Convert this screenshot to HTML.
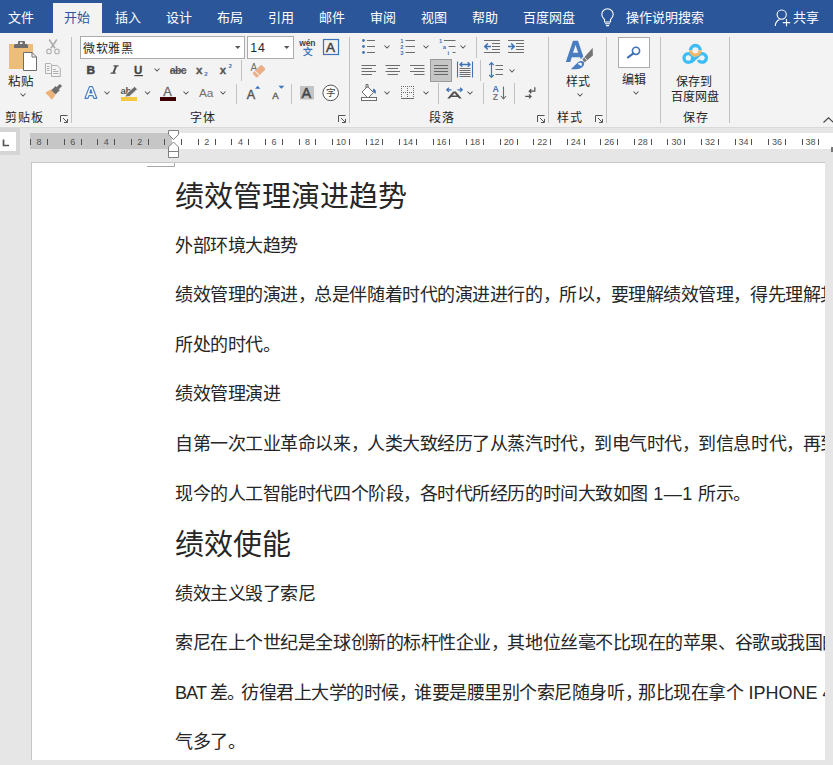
<!DOCTYPE html>
<html lang="zh-CN">
<head>
<meta charset="utf-8">
<style>
*{margin:0;padding:0;box-sizing:border-box}
html,body{width:833px;height:765px;overflow:hidden;background:#E6E6E6;font-family:"Liberation Sans",sans-serif;color:#262626}
.a{position:absolute;white-space:nowrap}
#tabs{position:absolute;left:0;top:0;width:833px;height:33px;background:#2B579A}
.tab{position:absolute;top:9px;font-size:13px;line-height:17px;color:#fff;white-space:nowrap}
#active{position:absolute;left:53px;top:3px;width:49px;height:30px;background:#F3F3F3}
#ribbon{position:absolute;left:0;top:33px;width:833px;height:94px;background:#F3F3F3}
#rb{position:absolute;left:0;top:127px;width:833px;height:1px;background:#D9D9D9}
.l{position:absolute;font-size:12px;line-height:14px;color:#262626;white-space:nowrap}
#svg{position:absolute;left:0;top:0}
#page{position:absolute;left:31px;top:163px;width:794px;height:597px;background:#fff;overflow:hidden;border-left:1px solid #C6C6C6}
.p{position:absolute;left:143px;font-size:18px;letter-spacing:-0.45px;line-height:18px;font-weight:200;color:#262626;white-space:nowrap}
.p i{font-style:normal;letter-spacing:-1.5px}
.p b{font-weight:200;letter-spacing:0}
.h{position:absolute;left:143px;font-size:29px;line-height:32px;font-weight:200;color:#262626;white-space:nowrap}
.rn{position:absolute;top:137px;font-size:9px;line-height:10px;color:#505050;white-space:nowrap}
</style>
</head>
<body>
<div id="tabs">
  <div id="active"></div>
  <div class="tab" style="left:8px">文件</div>
  <div class="tab" style="left:64px;color:#2B579A">开始</div>
  <div class="tab" style="left:115px">插入</div>
  <div class="tab" style="left:166px">设计</div>
  <div class="tab" style="left:217px">布局</div>
  <div class="tab" style="left:268px">引用</div>
  <div class="tab" style="left:319px">邮件</div>
  <div class="tab" style="left:370px">审阅</div>
  <div class="tab" style="left:421px">视图</div>
  <div class="tab" style="left:472px">帮助</div>
  <div class="tab" style="left:523px">百度网盘</div>
  <div class="tab" style="left:626px">操作说明搜索</div>
  <div class="tab" style="left:793px">共享</div>
  <svg style="position:absolute;left:0;top:0" width="833" height="33">
    <g fill="none" stroke="#fff" stroke-width="1.1">
      <path d="M604.5,19.5 C602.5,17.8 601.8,16 601.8,14.5 A5.7,5.7 0 0 1 613.2,14.5 C613.2,16 612.5,17.8 610.5,19.5 V22 H604.5 Z"/>
      <path d="M605,23.8 H610 M606,25.6 H609"/>
      <circle cx="781.7" cy="14.6" r="4.6"/>
      <path d="M775.2,26 C775.5,22.5 777.5,20.3 779.5,19.5"/>
      <path d="M786.5,19 V26.3 M782.8,22.6 H790.2"/>
    </g>
  </svg>
</div>
<div id="ribbon"></div>
<div id="rb"></div>
<svg id="svg" width="833" height="128" viewBox="0 0 833 128">
  <!-- separators -->
  <g fill="#C2C2C2">
    <rect x="71" y="37" width="1" height="86"/>
    <rect x="349" y="37" width="1" height="86"/>
    <rect x="548" y="37" width="1" height="86"/>
    <rect x="606" y="37" width="1" height="86"/>
    <rect x="660" y="37" width="1" height="86"/>
    <rect x="729" y="37" width="1" height="86"/>
    <rect x="241" y="60" width="1" height="21"/>
    <rect x="236" y="84" width="1" height="20"/>
    <rect x="291" y="84" width="1" height="20"/>
    <rect x="476" y="37" width="1" height="21"/>
    <rect x="480" y="60" width="1" height="21"/>
    <rect x="438" y="83" width="1" height="21"/>
    <rect x="483" y="83" width="1" height="21"/>
    <rect x="514" y="83" width="1" height="21"/>
  </g>
  <!-- chevrons -->
  <g fill="none" stroke="#555" stroke-width="1.05">
    <path d="M20.5,93.5 L23,96 L25.5,93.5"/>
    <path d="M154.5,68.5 L157,71 L159.5,68.5"/>
    <path d="M104.5,91.5 L107,94 L109.5,91.5"/>
    <path d="M145,91.5 L147.5,94 L150,91.5"/>
    <path d="M183.5,91.5 L186,94 L188.5,91.5"/>
    <path d="M220.5,91.5 L223,94 L225.5,91.5"/>
    <path d="M384.5,45.5 L387,48 L389.5,45.5"/>
    <path d="M423.5,45.5 L426,48 L428.5,45.5"/>
    <path d="M460.5,45.5 L463,48 L465.5,45.5"/>
    <path d="M509.5,69.5 L512,72 L514.5,69.5"/>
    <path d="M384.5,91.5 L387,94 L389.5,91.5"/>
    <path d="M423.5,91.5 L426,94 L428.5,91.5"/>
    <path d="M467.5,91.5 L470,94 L472.5,91.5"/>
    <path d="M577.5,93.5 L580,96 L582.5,93.5"/>
    <path d="M633.5,91.5 L636,94 L638.5,91.5"/>
    <path d="M823.5,122.5 L828.5,117.8 L833.5,122.5" stroke="#444"/>
  </g>
  <!-- launchers -->
  <g fill="none" stroke="#555" stroke-width="1">
    <path d="M60.5,122 V115.5 H67.5 M63,118 L67,122 M64,122.5 H67.5 V119"/>
    <path d="M338.5,122 V115.5 H345.5 M341,118 L345,122 M342,122.5 H345.5 V119"/>
    <path d="M537.5,122 V115.5 H544.5 M540,118 L544,122 M541,122.5 H544.5 V119"/>
    <path d="M595.5,122 V115.5 H602.5 M598,118 L602,122 M599,122.5 H602.5 V119"/>
  </g>

  <!-- CLIPBOARD -->
  <rect x="9" y="44" width="24" height="25" fill="#EDBE7A"/>
  <path d="M14,48 V45.5 Q14,44 15.5,44 H18 V42 Q18,41 19,41 H24 Q25,41 25,42 V44 H26.5 Q28,44 28,45.5 V48 Z" fill="#6D6D6D"/>
  <rect x="20" y="42.2" width="2.4" height="1.8" fill="#F3F3F3"/>
  <path d="M23.5,52.5 H32 L36.5,57 V70.5 H23.5 Z" fill="#fff" stroke="#6D6D6D"/>
  <path d="M32,52.5 V57 H36.5" fill="none" stroke="#6D6D6D"/>
  <!-- scissors -->
  <g fill="none" stroke="#B0B0B0">
    <path d="M49.2,39.5 L55,48.3 M56.8,39.5 L51,48.3" stroke-width="1.7"/>
    <circle cx="49" cy="51.4" r="2.3" stroke-width="1.1"/>
    <circle cx="57" cy="51.4" r="2.3" stroke-width="1.1"/>
  </g>
  <!-- copy -->
  <g fill="none" stroke="#B0B0B0" stroke-width="1">
    <path d="M45.5,63.5 H50.5 L52.5,65.5 V73.5 H45.5 Z M47,66.5 H49.5 M47,68.5 H49.5 M47,70.5 H49.5"/>
    <path d="M51.5,65.5 H57.3 L60.3,68.5 V76.5 H51.5 Z" fill="#F3F3F3"/>
    <path d="M53,69.5 H56 M53,71.5 H58.5 M53,73.5 H58.5"/>
  </g>
  <!-- format painter -->
  <path d="M45.3,92.4 L51.4,89.3 L55.3,95.4 L51.8,99.8 Z" fill="#EBB27A"/>
  <path d="M51.3,90.3 L55.6,86 L59.8,90.2 L55.5,94.5 Z" fill="#6D6D6D"/>
  <path d="M56.5,87.2 L59.8,83.9 L62,86.1 L58.7,89.4 Z" fill="#6D6D6D"/>

  <!-- FONT GROUP -->
  <rect x="80.5" y="36.5" width="164" height="22" fill="#fff" stroke="#ABABAB"/>
  <rect x="247.5" y="36.5" width="46" height="22" fill="#fff" stroke="#ABABAB"/>
  <path d="M235,46 H240.5 L237.75,49 Z" fill="#555"/>
  <path d="M284,46 H289.5 L286.75,49 Z" fill="#555"/>
  <text x="250.3" y="51.8" font-family="Liberation Sans" font-size="12.3" fill="#262626" letter-spacing="0.8">14</text>
  <!-- wen -->
  <text x="299.3" y="46" font-family="Liberation Sans" font-weight="bold" font-size="8.5" fill="#444" letter-spacing="-0.2">wén</text>
  <!-- enclosed A -->
  <rect x="323.5" y="39.5" width="15" height="15" fill="#F3F3F3" stroke="#3F73B8" stroke-width="1.2"/>
  <text x="326" y="51.6" font-family="Liberation Sans" font-size="13.5" fill="#444" stroke="#444" stroke-width="0.5">A</text>
  <!-- B I U -->
  <text x="86.5" y="73.8" font-family="Liberation Sans" font-weight="bold" font-size="11.8" fill="#444" stroke="#444" stroke-width="0.5">B</text>
  <path d="M113.6,65.2 H118.6 V66.5 H113.3 Z M110.7,72.4 H115.8 L115.6,73.7 H110.5 Z M115.2,65.8 H117.3 L114.4,73 H112.3 Z" fill="#505050"/>
  <text x="134" y="73.8" font-family="Liberation Sans" font-weight="bold" font-size="11.5" fill="#444" stroke="#444" stroke-width="0.3">U</text>
  <rect x="134.3" y="75" width="8.7" height="1.2" fill="#444"/>
  <!-- abc strike -->
  <text x="169.8" y="73.8" font-family="Liberation Sans" font-weight="bold" font-size="10.5" fill="#555" letter-spacing="-0.6">abc</text>
  <rect x="170" y="70.2" width="16.5" height="1.1" fill="#555"/>
  <!-- x2 -->
  <text x="196" y="73.9" font-family="Liberation Sans" font-weight="bold" font-size="11.5" fill="#555" stroke="#555" stroke-width="0.3">x</text>
  <text x="204.3" y="76.4" font-family="Liberation Sans" font-weight="bold" font-size="6.2" fill="#3F73B8">2</text>
  <text x="219.8" y="73.9" font-family="Liberation Sans" font-weight="bold" font-size="11.5" fill="#555" stroke="#555" stroke-width="0.3">x</text>
  <text x="228.6" y="67.9" font-family="Liberation Sans" font-weight="bold" font-size="6.2" fill="#3F73B8">2</text>
  <!-- eraser -->
  <text x="250.6" y="70.6" font-family="Liberation Sans" font-size="10" fill="#6D6D6D">A</text>
  <g transform="rotate(-45 259 71.2)"><rect x="252.7" y="68" width="12.6" height="6.4" rx="1.3" fill="#EBAE86"/><rect x="255.8" y="68" width="0.9" height="6.4" fill="#F3F3F3"/></g>
  
  <!-- text effects A -->
  <path d="M85,98.3 L89.4,86.6 H92.4 L96.8,98.3 H93.9 L92.9,95.6 H88.9 L88,98.3 Z M89.8,93 H92 L90.9,89.6 Z" fill="#fff" fill-rule="evenodd" stroke="#4A7EC0" stroke-width="1.2" stroke-linejoin="round"/><path d="M89.8,93 H92 L90.9,89.6 Z" fill="#4A7EC0"/>
  <!-- highlighter -->
  <text x="120.6" y="94.3" font-family="Liberation Sans" font-size="9.5" font-weight="bold" fill="#555" letter-spacing="-0.4">ab</text>
  <path d="M125,97 L126.6,93.6 L134.6,86.4 L137.4,89.2 L129.4,96.4 Z" fill="#6D6D6D" stroke="#F3F3F3" stroke-width="0.7"/>
  <rect x="121" y="97" width="16" height="4" fill="#F5C842"/>
  <!-- font color -->
  <text x="163.2" y="96.4" font-family="Liberation Sans" font-size="12.8" fill="#666" stroke="#666" stroke-width="0.3">A</text>
  <rect x="160" y="97" width="16" height="4" fill="#3C0000"/>
  <!-- Aa -->
  <text x="199" y="97.2" font-family="Liberation Sans" font-size="11.8" fill="#6D6D6D">Aa</text>
  <!-- grow/shrink -->
  <text x="246.8" y="98.7" font-family="Liberation Sans" font-size="12.6" fill="#555" stroke="#555" stroke-width="0.4">A</text>
  <path d="M255,88.8 L257.7,85.8 L260.4,88.8 Z" fill="#3F73B8"/>
  <text x="272.3" y="98.7" font-family="Liberation Sans" font-size="9.6" fill="#555" stroke="#555" stroke-width="0.35">A</text>
  <path d="M278.4,85.8 L284.4,85.8 L281.4,88.8 Z" fill="#3F73B8"/>
  <!-- shaded A -->
  <rect x="300" y="86" width="14" height="13.5" fill="#C4C4C4"/>
  <text x="301.6" y="98" font-family="Liberation Sans" font-size="14.5" fill="#444" stroke="#444" stroke-width="0.5">A</text>
  <!-- enclosed char -->
  <circle cx="330.7" cy="92.85" r="7.8" fill="#fff" stroke="#505050" stroke-width="1"/>

  <!-- PARAGRAPH -->
  <g fill="#3F73B8">
    <circle cx="363.5" cy="40.5" r="1.4"/><circle cx="363.5" cy="46.5" r="1.4"/><circle cx="363.5" cy="52.5" r="1.4"/>
  </g>
  <g fill="none" stroke="#6D6D6D" stroke-width="1">
    <path d="M367,40.5 H375 M367,46.5 H375 M367,52.5 H375"/>
    <path d="M405.5,40.5 H415 M405.5,46.5 H415 M405.5,52.5 H415"/>
    <path d="M444,40.5 H455.5 M448.5,46.5 H455.5 M452.5,52.5 H455.5"/>
  </g>
  <g font-family="Liberation Sans" font-size="5.8" font-weight="bold" fill="#3F73B8">
    <text x="400.3" y="42.8">1</text><text x="400.3" y="48.8">2</text><text x="400.3" y="54.8">3</text>
    <text x="439" y="42.8">1</text><text x="442.8" y="48.8">a</text><text x="447.6" y="54.8">i</text>
  </g>
  <!-- indent -->
  <g fill="none" stroke="#6D6D6D" stroke-width="1">
    <path d="M484,40.5 H500 M492,43.5 H500 M492,46.5 H500 M492,49.5 H500 M484,52.5 H500"/>
    <path d="M508,40.5 H524 M516,43.5 H524 M516,46.5 H524 M516,49.5 H524 M508,52.5 H524"/>
  </g>
  <g fill="none" stroke="#3F73B8" stroke-width="1.6">
    <path d="M485,46.5 H491 M487.8,43.5 L484.8,46.5 L487.8,49.5"/>
    <path d="M508,46.5 H514 M511.2,43.5 L514.2,46.5 L511.2,49.5"/>
  </g>
  <!-- alignment -->
  <g fill="none" stroke="#6D6D6D" stroke-width="1">
    <path d="M361.5,65.5 H376 M361.5,68.5 H372 M361.5,71.5 H376 M361.5,74.5 H372"/>
    <path d="M385.5,65.5 H400 M387.5,68.5 H398 M385.5,71.5 H400 M387.5,74.5 H398"/>
    <path d="M410,65.5 H424.5 M414,68.5 H424.5 M410,71.5 H424.5 M414,74.5 H424.5"/>
  </g>
  <rect x="430.5" y="59.5" width="21" height="22" fill="#C6C6C6" stroke="#9A9A9A"/>
  <path d="M434,65.5 H448 M434,68.5 H448 M434,71.5 H448 M434,74.5 H448" fill="none" stroke="#666" stroke-width="1"/>
  <!-- distributed -->
  <path d="M457.5,61.5 V77.5 M472.5,61.5 V77.5" stroke="#3F73B8" stroke-width="1.1"/>
  <path d="M460,64.5 H470 M462.3,62.2 L460,64.5 L462.3,66.8 M467.7,62.2 L470,64.5 L467.7,66.8" fill="none" stroke="#3F73B8" stroke-width="1.3"/>
  <path d="M459.5,68.5 H470.5 M459.5,70.5 H470.5 M459.5,72.5 H470.5 M459.5,74.5 H470.5 M459.5,76.5 H470.5" fill="none" stroke="#6D6D6D" stroke-width="1"/>
  <!-- line spacing -->
  <path d="M491.5,63 V77 M489.2,65.2 L491.5,62.6 L493.8,65.2 M489.2,74.8 L491.5,77.4 L493.8,74.8" fill="none" stroke="#3F73B8" stroke-width="1.2"/>
  <path d="M495.5,65.5 H503 M495.5,69.5 H503 M495.5,74.5 H503" fill="none" stroke="#6D6D6D" stroke-width="1"/>
  <!-- shading -->
  <path d="M362,92 L367.5,86.5 L373.5,92.5 L368,98 Z" fill="#fff" stroke="#6D6D6D" stroke-width="1"/>
  <path d="M366,88 V84.5 H368 V88" fill="none" stroke="#6D6D6D" stroke-width="1"/>
  <path d="M373.5,88.5 Q377,90 375.5,94 Q374,92 372.5,91 Z" fill="#3F73B8"/>
  <rect x="361.5" y="97.5" width="15" height="3" fill="#fff" stroke="#6D6D6D"/>
  <!-- borders -->
  <g fill="#6D6D6D">
    <path d="M401,86h1v1h-1zM403,86h1v1h-1zM405,86h1v1h-1zM407,86h1v1h-1zM409,86h1v1h-1zM411,86h1v1h-1zM413,86h1v1h-1z"/>
    <path d="M401,92h1v1h-1zM403,92h1v1h-1zM405,92h1v1h-1zM407,92h1v1h-1zM409,92h1v1h-1zM411,92h1v1h-1zM413,92h1v1h-1z"/>
    <path d="M401,88h1v1h-1zM401,90h1v1h-1zM401,94h1v1h-1zM401,96h1v1h-1z"/>
    <path d="M407,88h1v1h-1zM407,90h1v1h-1zM407,94h1v1h-1zM407,96h1v1h-1z"/>
    <path d="M413,88h1v1h-1zM413,90h1v1h-1zM413,94h1v1h-1zM413,96h1v1h-1z"/>
    <rect x="401" y="98" width="13" height="1"/>
  </g>
  <!-- CN layout -->
  <path d="M447.3,98.6 L453.2,91.5 H455.8 L461.7,98.6 H459.1 L457.9,97.1 H451.1 L449.9,98.6 Z M452.4,95.6 H456.6 L454.5,93 Z" fill="#505050" fill-rule="evenodd"/>
  <path d="M447,89.8 H451.5 M448.9,87.7 L446.8,89.8 L448.9,91.9 M457.5,89.8 H462 M460.1,87.7 L462.2,89.8 L460.1,91.9" fill="none" stroke="#3F73B8" stroke-width="1.3"/>
  <!-- sort -->
  <text x="492.4" y="91.8" font-family="Liberation Sans" font-size="8.8" font-weight="bold" fill="#3F73B8">A</text>
  <text x="492.8" y="99.5" font-family="Liberation Sans" font-size="8.5" font-weight="bold" fill="#777">Z</text>
  <path d="M503.5,86.5 V99 M501,96 L503.5,99 L506,96" fill="none" stroke="#6D6D6D" stroke-width="1.1"/>
  <!-- show marks -->
  <path d="M534.8,87.2 V91.2 H529.3 M531.3,89.2 L529.3,91.2 L531.3,93.2" fill="none" stroke="#555" stroke-width="1.3"/>
  <path d="M525.2,96.4 H531 M529,94.4 L531,96.4 L529,98.4" fill="none" stroke="#555" stroke-width="1.3"/>

  <!-- STYLES -->
  <path d="M565.8,62 L573,40.8 H578 L583.3,56.5 L580.8,59.3 L580,57.2 H571.8 L570.3,62 Z M573,52.8 L575.5,45.1 L578.2,52.8 Z" fill="#4A7EC0" fill-rule="evenodd"/>
  <path d="M582.4,59.6 L592.7,47.7 L592.9,55.4 L584.7,62.2 Z" fill="#757575"/><path d="M584.4,57.6 L587.2,60.3" stroke="#F3F3F3" stroke-width="0.9"/>
  <path d="M570.8,69.3 L578,62.3 Q581,59.9 583.5,61.6 Q585.2,64 582.6,67 Q580,69.3 576,69.3 Z" fill="#4A7EC0"/>
  <path d="M577.5,64 Q579.5,62.2 581.5,63 Q582.5,64.5 581,66.2 Q580,64.5 577.5,64 Z" fill="#fff"/>

  <!-- EDITING -->
  <rect x="618.5" y="37.5" width="31" height="30" fill="#fff" stroke="#ABABAB"/>
  <circle cx="636" cy="50.8" r="3.6" fill="none" stroke="#3F73B8" stroke-width="1.6"/>
  <path d="M633.4,53.4 L628,57.3" stroke="#3F73B8" stroke-width="2.2" stroke-linecap="round"/>

  <!-- BAIDU -->
  <g fill="none" stroke-width="3.3">
    <circle cx="688.3" cy="58" r="4.3" stroke="#3CBDF5"/>
    <path d="M698.3,59.9 A4.3,4.3 0 1 0 698.6,55.4 L690.8,62.3" stroke="#3CBDF5"/>
    <path d="M690.6,50.3 A4.8,4.8 0 0 1 700.2,50.3" stroke="#3CBDF5"/>
    <path d="M690.6,50.3 A4.8,4.8 0 0 0 700.2,50.3" stroke="#F5B868"/>
  </g>
</svg>
<div class="l" style="left:83px;top:42px;color:#262626;letter-spacing:0.6px">微软雅黑</div>
<div class="l" style="left:303px;top:47px;font-size:9.5px;line-height:10px;color:#3F73B8;font-weight:bold">文</div>
<div class="l" style="left:8px;top:75px;font-size:12.5px">粘贴</div>
<div class="l" style="left:325.5px;top:87.5px;font-size:9.5px;line-height:10px;color:#444">字</div>
<div class="l" style="left:566px;top:75px;font-size:12px">样式</div>
<div class="l" style="left:622px;top:73px;font-size:12px">编辑</div>
<div class="l" style="left:676px;top:75px;font-size:12px">保存到</div>
<div class="l" style="left:671px;top:90px;font-size:12px">百度网盘</div>
<div class="l" style="left:4.5px;top:111px;letter-spacing:1px;font-size:12px">剪贴板</div>
<div class="l" style="left:189.5px;top:111px;letter-spacing:1px">字体</div>
<div class="l" style="left:428.5px;top:111px;letter-spacing:1px">段落</div>
<div class="l" style="left:556.5px;top:111px;letter-spacing:1px">样式</div>
<div class="l" style="left:683px;top:111px;letter-spacing:1px">保存</div>
<div id="page">
  <div class="h" style="top:18px">绩效管理演进趋势</div>
  <div class="p" style="top:74px">外部环境大趋势</div>
  <div class="p" style="top:123px">绩效管理的演进<i>，</i>总是伴随着时代的演进进行的<i>，</i>所以<i>，</i>要理解绩效管理<i>，</i>得先理解其</div>
  <div class="p" style="top:173px">所处的时代。</div>
  <div class="p" style="top:222px">绩效管理演进</div>
  <div class="p" style="top:272px">自第一次工业革命以来<i>，</i>人类大致经历了从蒸汽时代<i>，</i>到电气时代<i>，</i>到信息时代<i>，</i>再到</div>
  <div class="p" style="top:322px">现今的人工智能时代四个阶段<i>，</i>各时代所经历的时间大致如图<b style="letter-spacing:0.5px"> 1—1 </b>所示。</div>
  <div class="h" style="top:366px">绩效使能</div>
  <div class="p" style="top:422px">绩效主义毁了索尼</div>
  <div class="p" style="top:471px">索尼在上个世纪是全球创新的标杆性企业<i>，</i>其地位丝毫不比现在的苹果<i>、</i>谷歌或我国的</div>
  <div class="p" style="top:521px"><b style="letter-spacing:-0.9px">BAT </b>差<i style="letter-spacing:-4.25px">。</i>彷徨君上大学的时候<i style="letter-spacing:-3.05px">，</i>谁要是腰里别个索尼随身听<i style="letter-spacing:-4.3px">，</i>那比现在拿个<b> IPHONE 4</b></div>
  <div class="p" style="top:570px">气多了。</div>
</div>
<div style="position:absolute;left:0;top:128px;width:20px;height:27px;background:#D5D5D5"></div>
<div style="position:absolute;left:0;top:132px;width:16px;height:19px;background:#fff"></div>
<svg style="position:absolute;left:0;top:0" width="833" height="170">
<path d="M3.5,139.5 V145.5 H9" fill="none" stroke="#555" stroke-width="1.7"/>
<rect x="30" y="133" width="142" height="16" fill="#C6C6C6"/>
<rect x="172" y="133" width="661" height="16" fill="#fff"/>
<path d="M30.5,139 V145 M47.5,139 V145 M64.5,139 V145 M81.5,139 V145 M97.5,139 V145 M114.5,139 V145 M131.5,139 V145 M148.5,139 V145 M164.5,139 V145 M181.5,139 V145 M198.5,139 V145 M215.5,139 V145 M231.5,139 V145 M248.5,139 V145 M265.5,139 V145 M282.5,139 V145 M299.5,139 V145 M315.5,139 V145 M332.5,139 V145 M349.5,139 V145 M366.5,139 V145 M382.5,139 V145 M399.5,139 V145 M416.5,139 V145 M433.5,139 V145 M449.5,139 V145 M466.5,139 V145 M483.5,139 V145 M500.5,139 V145 M517.5,139 V145 M533.5,139 V145 M550.5,139 V145 M567.5,139 V145 M584.5,139 V145 M600.5,139 V145 M617.5,139 V145 M634.5,139 V145 M651.5,139 V145 M667.5,139 V145 M684.5,139 V145 M701.5,139 V145 M718.5,139 V145 M735.5,139 V145 M751.5,139 V145 M768.5,139 V145 M785.5,139 V145 M802.5,139 V145 M818.5,139 V145" stroke="#505050" stroke-width="1"/>
<g font-family="Liberation Sans" font-size="9" fill="#505050"><text x="39.1" y="144.8" text-anchor="middle">8</text><text x="72.7" y="144.8" text-anchor="middle">6</text><text x="106.2" y="144.8" text-anchor="middle">4</text><text x="139.7" y="144.8" text-anchor="middle">2</text><text x="206.8" y="144.8" text-anchor="middle">2</text><text x="240.4" y="144.8" text-anchor="middle">4</text><text x="273.9" y="144.8" text-anchor="middle">6</text><text x="307.4" y="144.8" text-anchor="middle">8</text><text x="341.0" y="144.8" text-anchor="middle">10</text><text x="374.5" y="144.8" text-anchor="middle">12</text><text x="408.1" y="144.8" text-anchor="middle">14</text><text x="441.6" y="144.8" text-anchor="middle">16</text><text x="475.1" y="144.8" text-anchor="middle">18</text><text x="508.7" y="144.8" text-anchor="middle">20</text><text x="542.2" y="144.8" text-anchor="middle">22</text><text x="575.8" y="144.8" text-anchor="middle">24</text><text x="609.3" y="144.8" text-anchor="middle">26</text><text x="642.8" y="144.8" text-anchor="middle">28</text><text x="676.4" y="144.8" text-anchor="middle">30</text><text x="709.9" y="144.8" text-anchor="middle">32</text><text x="743.5" y="144.8" text-anchor="middle">34</text><text x="777.0" y="144.8" text-anchor="middle">36</text><text x="810.5" y="144.8" text-anchor="middle">38</text></g>
<path d="M168.5,130.5 H178.5 V134.5 L173.5,139.5 L168.5,134.5 Z" fill="#fff" stroke="#808080"/>
<path d="M173.5,142 L178.5,147 V157.5 H168.5 V147 Z M168.5,151.5 H178.5" fill="#fff" stroke="#808080"/>
<rect x="31" y="162" width="794" height="1" fill="#C6C6C6"/>
<path d="M147,166.5 H174.5 V163" fill="none" stroke="#A8A8A8" stroke-width="1"/>
<rect x="831" y="147" width="2" height="5" fill="#777"/>
</svg>
</body>
</html>
